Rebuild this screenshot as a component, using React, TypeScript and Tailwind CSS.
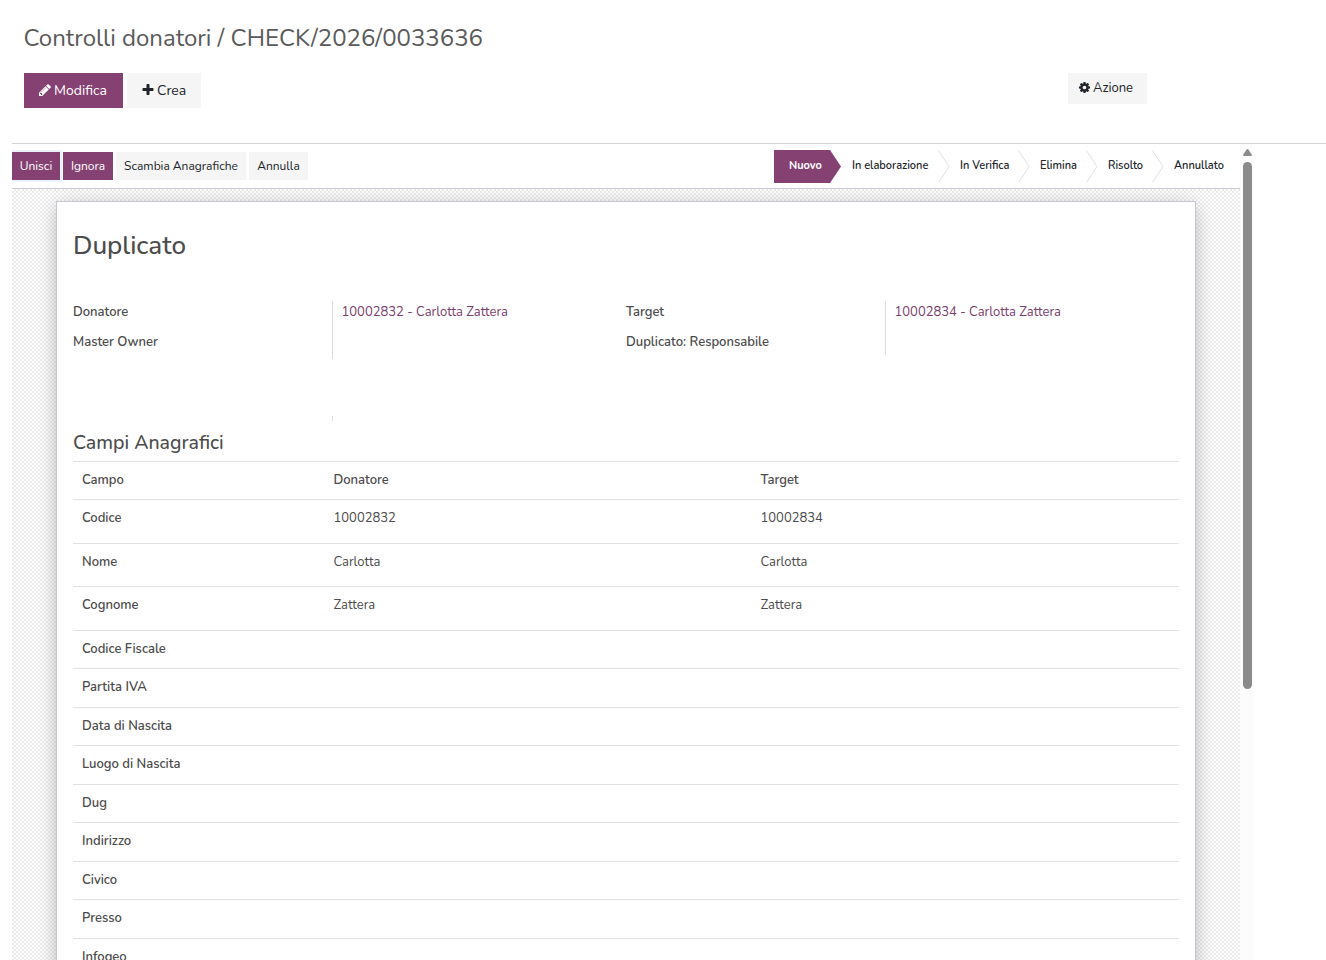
import React from 'react';

type IconProps = { className: string };

const PencilIcon: React.FC<IconProps> = ({ className }) => (
  <svg viewBox="0 0 1792 1792" fill="currentColor" className={className}>
    <path d="M491 1536l91-91-235-235-91 91v107h128v128h107zm523-928q0-22-22-22-10 0-17 7l-542 542q-7 7-7 17 0 22 22 22 10 0 17-7l542-542q7-7 7-17zm-54-192l416 416-832 832h-416v-416zm683 96q0 53-37 90l-166 166-416-416 166-165q36-38 90-38 53 0 91 38l235 234q37 39 37 91z" />
  </svg>
);

const PlusIcon: React.FC<IconProps> = ({ className }) => (
  <svg viewBox="0 0 1792 1792" fill="currentColor" className={className}>
    <path d="M1600 736v192q0 40-28 68t-68 28h-416v416q0 40-28 68t-68 28h-192q-40 0-68-28t-28-68v-416h-416q-40 0-68-28t-28-68v-192q0-40 28-68t68-28h416v-416q0-40 28-68t68-28h192q40 0 68 28t28 68v416h416q40 0 68 28t28 68z" />
  </svg>
);

const CogIcon: React.FC<IconProps> = ({ className }) => (
  <svg viewBox="0 0 1792 1792" fill="currentColor" className={className}>
    <path d="M1152 896q0-106-75-181t-181-75-181 75-75 181 75 181 181 75 181-75 75-181zm512-109v222q0 12-8 23t-20 13l-185 28q-19 54-39 91 35 50 107 138 10 12 10 25t-9 23q-27 37-99 108t-94 71q-12 0-26-9l-138-108q-44 23-91 38-16 136-29 186-7 28-36 28h-222q-14 0-24.5-8.5t-11.5-21.5l-28-184q-49-16-90-37l-141 107q-10 9-25 9-14 0-25-11-126-114-165-168-7-10-7-23 0-12 8-23 15-21 51-66.5t54-70.5q-27-50-41-99l-183-27q-13-2-21-12.5t-8-23.5v-222q0-12 8-23t19-13l186-28q14-46 39-92-40-57-107-138-10-12-10-24 0-10 9-23 26-36 98.5-107.5t94.5-71.5q13 0 26 10l138 107q44-23 91-38 16-136 29-186 7-28 36-28h222q14 0 24.5 8.5t11.5 21.5l28 184q49 16 90 37l142-107q9-9 24-9 13 0 25 10 129 119 165 170 7 8 7 22 0 12-8 23-15 21-51 66.5t-54 70.5q26 50 41 98l183 28q13 2 21 12.5t8 23.5z" />
  </svg>
);

const Chevron: React.FC = () => (
  <svg viewBox="0 0 12 33" className="h-[33px] w-3 shrink-0" fill="none" stroke="#dee2e6">
    <path d="M0.5 0.5 L11 16.5 L0.5 32.5" />
  </svg>
);

const stages = [
  { label: 'In elaborazione', width: 'w-[97px] pl-[11px]' },
  { label: 'In Verifica', width: 'w-[68px] pl-[10px]' },
  { label: 'Elimina', width: 'w-[56px] pl-[10px]' },
  { label: 'Risolto', width: 'w-[54px] pl-[10px]' },
];

const rows = [
  { campo: 'Codice', donatore: '10002832', target: '10002834' },
  { campo: 'Nome', donatore: 'Carlotta', target: 'Carlotta' },
  { campo: 'Cognome', donatore: 'Zattera', target: 'Zattera' },
  { campo: 'Codice Fiscale' },
  { campo: 'Partita IVA' },
  { campo: 'Data di Nascita' },
  { campo: 'Luogo di Nascita' },
  { campo: 'Dug' },
  { campo: 'Indirizzo' },
  { campo: 'Civico' },
  { campo: 'Presso' },
  { campo: 'Infogeo' },
];

const Header: React.FC = () => (
  <header className="h-[143px] pl-6 pt-[22px]">
    <h1 className="-ml-[0.5px] h-8 whitespace-nowrap text-2xl leading-8 text-[#5a5a5a]">
      Controlli donatori / CHECK/2026/0033636
    </h1>
    <div className="mt-[19px] flex items-start text-sm text-[#212529]">
      <button className="flex h-[35px] w-[99px] items-center bg-[#854172] pl-[14px] text-white">
        <PencilIcon className="mr-0.5 size-3.5 -translate-y-px" />
        Modifica
      </button>
      <button className="ml-1 flex h-[35px] w-[74px] items-center bg-[#f5f5f5] pl-[14px]">
        <PlusIcon className="mr-0.5 size-3.5 -translate-y-px" />
        Crea
      </button>
      <button className="ml-[867px] flex h-[31px] w-[79px] items-center bg-[#f5f5f5] pl-[9.5px] text-[13px]">
        <CogIcon className="mr-[2.5px] size-[13px] -translate-y-px" />
        Azione
      </button>
    </div>
  </header>
);

const StatusBar: React.FC = () => (
  <div className="flex h-[45px] items-start border-b border-[#cacad5] bg-white text-xs text-[#212529]">
    <div className="flex gap-[3px] pt-2">
      <button className="h-7 w-12 bg-[#854172] text-white shadow-[0_0_0_2px_#edf3fc]">Unisci</button>
      <button className="h-7 w-[50px] bg-[#854172] text-white">Ignora</button>
      <button className="h-7 w-[130px] bg-[#f5f5f5]">Scambia Anagrafiche</button>
      <button className="h-7 w-[59px] bg-[#f5f5f5]">Annulla</button>
    </div>
    <div className="ml-auto flex h-[33px] translate-y-1.5 items-center whitespace-nowrap text-[11px] font-semibold leading-[31px]">
      <div className="h-[33px] w-[67px] bg-[#854172] pl-[15px] font-bold text-white [clip-path:polygon(0_0,56px_0,100%_50%,56px_100%,0_100%)]">
        Nuovo
      </div>
      {stages.map((stage) => (
        <React.Fragment key={stage.label}>
          <div className={`h-[33px] ${stage.width}`}>{stage.label}</div>
          <Chevron />
        </React.Fragment>
      ))}
      <div className="h-[33px] w-[76px] pl-[10px]">Annullato</div>
    </div>
  </div>
);

const FieldGroup: React.FC<{ labels: string[]; link: string; line: string }> = ({ labels, link, line }) => (
  <div className="flex w-[553px] items-start text-[13px] leading-5">
    <div className="flex w-[259px] flex-col gap-2.5 pt-px font-[560]">
      {labels.map((label) => (
        <div key={label}>{label}</div>
      ))}
    </div>
    <div className={`border-l border-[#dcdce0] pl-[8.5px] pt-px text-[#7c3e6b] ${line}`}>{link}</div>
  </div>
);

const Sheet: React.FC = () => (
  <div className="ml-11 mt-3 h-[900px] w-[1140px] border border-[#c8c8d3] bg-white px-4 pt-[26px] text-[#4c4c4c] shadow-[0_4px_20px_-3px_rgba(0,0,0,0.33)]">
    <h2 className="h-9 text-[26px] font-[550] leading-9">Duplicato</h2>
    <div className="mt-[37px] flex">
      <FieldGroup labels={['Donatore', 'Master Owner']} link="10002832 - Carlotta Zattera" line="h-[58px]" />
      <FieldGroup labels={['Target', 'Duplicato: Responsabile']} link="10002834 - Carlotta Zattera" line="h-[54px]" />
    </div>
    <div className="ml-[259px] mt-[57px] h-[5px] border-l border-[#dcdce0]"></div>
    <h3 className="mt-2 h-[31.6px] text-[19.5px] font-[550] leading-7">Campi Anagrafici</h3>
    <div className="text-[13px] leading-5">
      <div className="flex h-[38.5px] border-t border-[#dee2e6] pl-[9px] pt-2 font-[560]">
        <div className="w-[251.5px]">Campo</div>
        <div className="w-[427px]">Donatore</div>
        <div>Target</div>
      </div>
      {rows.map((row) => (
        <div
          key={row.campo}
          className={`flex border-t border-[#dee2e6] pl-[9px] pt-2 ${row.donatore ? 'h-[43.58px]' : 'h-[38.5px]'}`}
        >
          <div className="w-[251.5px] font-[560]">{row.campo}</div>
          <div className="w-[427px]">{row.donatore}</div>
          <div>{row.target}</div>
        </div>
      ))}
    </div>
  </div>
);

const ScrollBar: React.FC = () => (
  <div className="flex w-3.5 flex-col items-center bg-[#fcfcfc] pt-[5px]">
    <svg viewBox="0 0 9 7" className="h-[7px] w-[9px]" fill="#8b8b8b">
      <path d="M3.6 0.6 Q4.5 -0.4 5.4 0.6 L8.7 5.4 Q9.2 7 8 7 H1 Q-0.2 7 0.3 5.4 Z" />
    </svg>
    <div className="mt-1.5 h-[527px] w-[9px] rounded-full bg-[#8b8b8b]"></div>
  </div>
);

const App: React.FC = () => {
  return (
    <div className="h-[960px] w-[1326px] overflow-hidden bg-white font-['Nunito','Lato',sans-serif]">
      <Header />
      <main className="ml-3 flex h-[817px] border-t border-[#d3d3d6]">
        <div className="w-[1228px] overflow-hidden">
          <StatusBar />
          <div className="flex h-[771px] overflow-hidden bg-[repeating-conic-gradient(#ebebeb_0_25%,#ffffff_0_50%)] bg-[length:4px_4px]">
            <Sheet />
          </div>
        </div>
        <ScrollBar />
      </main>
    </div>
  );
};

export default App;
